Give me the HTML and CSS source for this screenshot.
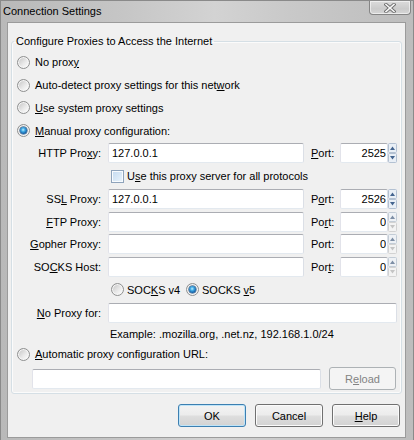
FILE: index.html
```html
<!DOCTYPE html>
<html>
<head>
<meta charset="utf-8">
<title>Connection Settings</title>
<link rel="stylesheet" href="styles.css">
</head>
<body>
<div class="window">
  <div class="titlebar">
    <span class="title">Connection Settings</span>
    <span class="close"><svg width="12" height="10" viewBox="0 0 12 10"><path d="M2 1.5L10 8.5M10 1.5L2 8.5" stroke="#6c6c6c" stroke-width="3.4" stroke-linecap="square"/><path d="M2 1.5L10 8.5M10 1.5L2 8.5" stroke="#f6f6f6" stroke-width="1.6" stroke-linecap="square"/></svg></span>
  </div>
  <div class="frame">
    <div class="client">
      <fieldset class="group">
        <legend>Configure Proxies to Access the Internet</legend>
        <div class="opt"><span class="radio"></span><span>No prox<u>y</u></span></div>
        <div class="opt"><span class="radio"></span><span>Auto-detect proxy settings for this net<u>w</u>ork</span></div>
        <div class="opt"><span class="radio"></span><span><u>U</u>se system proxy settings</span></div>
        <div class="opt"><span class="radio on"></span><span><u>M</u>anual proxy configuration:</span></div>
        <div class="manual">
          <span class="lbl">HTTP Pro<u>x</u>y:</span>
          <input class="tb host" value="127.0.0.1">
          <span class="plbl"><u>P</u>ort:</span>
          <span class="port"><input class="tb num" value="2525"><svg class="spin" width="9" height="20" viewBox="0 0 9 20"><rect x=".5" y=".5" width="8" height="9" rx="1" fill="#e9eff6" stroke="#b3c1d2"/><rect x=".5" y="10.5" width="8" height="9" rx="1" fill="#e9eff6" stroke="#b3c1d2"/><path d="M2 7h5L4.5 3.5z" fill="#44648f"/><path d="M2 13h5l-2.5 3.5z" fill="#44648f"/></svg></span>

          <div class="wide check"><span class="cbox"></span><span>U<u>s</u>e this proxy server for all protocols</span></div>

          <span class="lbl">SS<u>L</u> Proxy:</span>
          <input class="tb host" value="127.0.0.1">
          <span class="plbl">P<u>o</u>rt:</span>
          <span class="port"><input class="tb num" value="2526"><svg class="spin" width="9" height="20" viewBox="0 0 9 20"><rect x=".5" y=".5" width="8" height="9" rx="1" fill="#e9eff6" stroke="#b3c1d2"/><rect x=".5" y="10.5" width="8" height="9" rx="1" fill="#e9eff6" stroke="#b3c1d2"/><path d="M2 7h5L4.5 3.5z" fill="#44648f"/><path d="M2 13h5l-2.5 3.5z" fill="#44648f"/></svg></span>

          <span class="lbl"><u>F</u>TP Proxy:</span>
          <input class="tb host" value="">
          <span class="plbl">Po<u>r</u>t:</span>
          <span class="port"><input class="tb num" value="0"><svg class="spin" width="9" height="20" viewBox="0 0 9 20"><rect x=".5" y=".5" width="8" height="9" rx="1" fill="#eef1f5" stroke="#c3ccd6"/><rect x=".5" y="10.5" width="8" height="9" rx="1" fill="#f3f3f3" stroke="#d2d2d2"/><path d="M2 7h5L4.5 3.5z" fill="#7d8ea5"/><path d="M2 13h5l-2.5 3.5z" fill="#c4c4c4"/></svg></span>

          <span class="lbl"><u>G</u>opher Proxy:</span>
          <input class="tb host" value="">
          <span class="plbl">Port:</span>
          <span class="port"><input class="tb num" value="0"><svg class="spin" width="9" height="20" viewBox="0 0 9 20"><rect x=".5" y=".5" width="8" height="9" rx="1" fill="#eef1f5" stroke="#c3ccd6"/><rect x=".5" y="10.5" width="8" height="9" rx="1" fill="#f3f3f3" stroke="#d2d2d2"/><path d="M2 7h5L4.5 3.5z" fill="#7d8ea5"/><path d="M2 13h5l-2.5 3.5z" fill="#c4c4c4"/></svg></span>

          <span class="lbl">SO<u>C</u>KS Host:</span>
          <input class="tb host" value="">
          <span class="plbl">Por<u>t</u>:</span>
          <span class="port"><input class="tb num" value="0"><svg class="spin" width="9" height="20" viewBox="0 0 9 20"><rect x=".5" y=".5" width="8" height="9" rx="1" fill="#eef1f5" stroke="#c3ccd6"/><rect x=".5" y="10.5" width="8" height="9" rx="1" fill="#f3f3f3" stroke="#d2d2d2"/><path d="M2 7h5L4.5 3.5z" fill="#7d8ea5"/><path d="M2 13h5l-2.5 3.5z" fill="#c4c4c4"/></svg></span>

          <div class="wide socks"><span class="sopt first"><span class="radio"></span><span>SOC<u>K</u>S v4</span></span><span class="sopt"><span class="radio on"></span><span>SOCKS <u>v</u>5</span></span></div>

          <span class="lbl"><u>N</u>o Proxy for:</span>
          <input class="tb noproxy" value="">

          <div class="wide example">Example: .mozilla.org, .net.nz, 192.168.1.0/24</div>
        </div>
        <div class="opt auto"><span class="radio"></span><span><u>A</u>utomatic proxy configuration URL:</span></div>
        <div class="urlrow">
          <input class="tb url" value="">
          <button class="btn reload" disabled>R<u>e</u>load</button>
        </div>
      </fieldset>
      <div class="buttons">
        <button class="btn default">OK</button>
        <button class="btn">Cancel</button>
        <button class="btn"><u>H</u>elp</button>
      </div>
    </div>
  </div>
</div>
</body>
</html>
```
FILE: styles.css
```css
html, body {
  margin: 0;
  padding: 0;
}
body {
  font-family: "Liberation Sans", Arial, sans-serif;
  font-size: 11px;
  color: #000;
  background: #c4c4c4;
}
.window {
  width: 414px;
  height: 440px;
  box-sizing: border-box;
  border: 1px solid #8a8a8a;
  border-bottom: none;
  background: linear-gradient(to right, #b9b9b9 0%, #c6c6c6 30%, #d3d3d3 52%, #c9c9c9 70%, #bdbdbd 100%);
  display: flex;
  flex-direction: column;
}
.titlebar {
  height: 21px;
  display: flex;
  justify-content: space-between;
  align-items: flex-start;
  flex: none;
}
.title {
  padding: 3px 0 0 2px;
  line-height: 15px;
  font-size: 11px;
}
.close {
  width: 42px;
  height: 14px;
  box-sizing: border-box;
  margin-right: 2px;
  border: 1px solid #858585;
  border-top: none;
  border-radius: 0 0 4px 4px;
  background: linear-gradient(#dcdcdc, #cbcbcb 60%, #d6d6d6);
  box-shadow: inset 0 0 0 1px rgba(255,255,255,0.55);
  display: flex;
  align-items: center;
  justify-content: center;
}
.frame {
  flex: 1;
  display: flex;
  padding: 0 7px 2px 6px;
}
.client {
  flex: 1;
  border: 1px solid #9b9b9b;
  background: #f0f0f0;
  display: flex;
  flex-direction: column;
}
.group {
  margin: 10px 3px 0 3px;
  padding: 2px 2px 3px 2px;
  border: 1px solid #d5dfe5;
  border-radius: 3px;
  box-shadow: inset 0 0 0 1px #fbfbfb;
  min-width: 0;
}
.group legend {
  padding: 0 2px;
  line-height: 16px;
  font-size: 11px;
}
.opt {
  height: 22.75px;
  display: flex;
  align-items: center;
  gap: 5px;
  padding-left: 3px;
}
.opt.auto {
  height: 20px;
}
.radio {
  width: 13px;
  height: 13px;
  box-sizing: border-box;
  border-radius: 50%;
  border: 1px solid #8f9090;
  background: linear-gradient(135deg, #c9c9c9 10%, #e9e9e9 55%, #fcfcfc 90%);
  box-shadow: inset 0 0 0 1px #f6f6f6;
  display: inline-flex;
  align-items: center;
  justify-content: center;
  flex: none;
}
.radio.on::after {
  content: "";
  width: 7px;
  height: 7px;
  border-radius: 50%;
  background: radial-gradient(circle at 45% 40%, #c4eeff 0, #45aee6 30%, #1664ab 65%, #0d3768 100%);
  box-shadow: 0 0 0 0.5px #20507f;
}
.manual {
  display: grid;
  grid-template-columns: 94px 196px 36px 57px;
  grid-template-rows: repeat(8, 22.75px) 20px;
  align-items: center;
}
.lbl {
  text-align: right;
  padding-right: 7px;
  white-space: nowrap;
}
.plbl {
  padding-left: 7px;
}
.tb {
  box-sizing: border-box;
  height: 20px;
  margin: 0;
  border: 1px solid;
  border-color: #abadb3 #dbdfe6 #e3e9ef #e2e3ea;
  border-radius: 2px;
  background: #fff;
  font-family: "Liberation Sans", Arial, sans-serif;
  font-size: 11px;
  color: #000;
  padding: 0 3px;
  outline: none;
}
.host {
  width: 196px;
}
.port {
  display: flex;
  align-items: center;
}
.num {
  width: 48px;
  text-align: right;
  padding-right: 1px;
}
.spin {
  display: block;
  flex: none;
}
.wide {
  grid-column: 2 / 5;
  display: flex;
  align-items: center;
}
.check {
  padding-left: 3px;
  gap: 3px;
}
.cbox {
  width: 13px;
  height: 13px;
  box-sizing: border-box;
  border: 1px solid #8ea3bb;
  background: linear-gradient(135deg, #c4daf0, #eaf4fc);
  box-shadow: inset 0 0 0 1px #f8fbfe;
  flex: none;
}
.socks {
  padding-left: 3px;
}
.sopt {
  display: inline-flex;
  align-items: center;
  gap: 3px;
}
.sopt.first {
  width: 75px;
}
.noproxy {
  grid-column: 2 / 5;
  width: 289px;
}
.example {
  padding-left: 2px;
}
.urlrow {
  display: flex;
  align-items: center;
  margin-top: 3px;
  padding-left: 18px;
  height: 23px;
}
.url {
  width: 289px;
}
.btn {
  box-sizing: border-box;
  width: 68px;
  height: 23px;
  margin: 0;
  padding: 0;
  border: 1px solid #707070;
  border-radius: 3px;
  background: linear-gradient(#f3f3f3 0%, #ececec 48%, #dedede 52%, #d2d2d2 100%);
  box-shadow: inset 0 0 0 1px #fbfbfb;
  font-family: "Liberation Sans", Arial, sans-serif;
  font-size: 11px;
  color: #000;
}
.reload {
  width: 67px;
  margin-left: 8px;
  border-color: #adb2b5;
  background: #f4f4f4;
  box-shadow: none;
  color: #838383;
}
.btn.default {
  border-color: #3c7fb1;
  box-shadow: inset 0 0 0 1px #bfe4f8;
}
.buttons {
  display: flex;
  justify-content: flex-end;
  gap: 9px;
  margin-top: 10px;
  padding-right: 5px;
}
```
